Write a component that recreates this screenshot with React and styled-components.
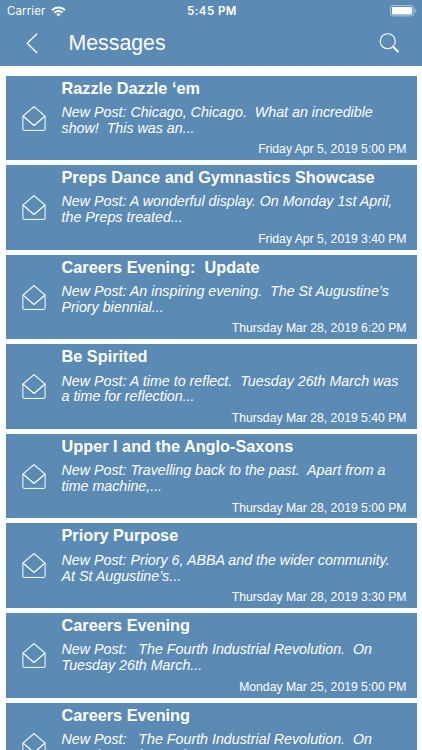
import React from "react";
import styled, { createGlobalStyle } from "styled-components";

const blue = "#5b8ab4";

const GlobalStyle = createGlobalStyle`
  * {
    box-sizing: border-box;
  }
  html, body {
    margin: 0;
    height: 100%;
    overflow: hidden;
    background: #fff;
  }
`;

const Screen = styled.div`
  width: 422px;
  height: 750px;
  overflow: hidden;
  display: flex;
  flex-direction: column;
  background: #fff;
  color: #fff;
  font-family: "Liberation Sans", Arial, sans-serif;
`;

const Header = styled.header`
  flex: none;
  height: 65.5px;
  background: ${blue};
`;

const StatusBar = styled.div`
  height: 22px;
  padding: 0 5px 0 7px;
  display: grid;
  grid-template-columns: 1fr auto 1fr;
  align-items: center;
  font-family: Inter, sans-serif;
  font-size: 11.5px;
  line-height: 22px;
`;

const Carrier = styled.div`
  display: flex;
  align-items: center;
  gap: 5.5px;
  letter-spacing: 0.12px;
`;

const Clock = styled.div`
  font-weight: 600;
  letter-spacing: 0.45px;
`;

const Battery = styled.svg`
  justify-self: end;
`;

const NavBar = styled.div`
  height: 43px;
  padding: 0 22px 0 26px;
  display: flex;
  align-items: center;
`;

const NavTitle = styled.h1`
  flex: 1;
  margin: 0 0 0 30.5px;
  font-size: 21.3px;
  font-weight: 400;
  line-height: 43px;
`;

const List = styled.main`
  padding: 10px 5.5px 0;
  display: flex;
  flex-direction: column;
  gap: 5.1px;
`;

const Card = styled.article`
  flex: none;
  height: 84.5px;
  display: flex;
  background: ${blue};
`;

const IconCell = styled.div`
  width: 56px;
  padding: 30px 0 0 16px;
`;

const Content = styled.div`
  flex: 1;
  padding-right: 10px;
  display: flex;
  flex-direction: column;
`;

const Title = styled.h2`
  margin: 3px 0 0;
  font-size: 16.3px;
  font-weight: 700;
  line-height: 19px;
  white-space: pre;
`;

const Preview = styled.p`
  margin: 7.4px 0 0;
  font-size: 14.25px;
  font-style: italic;
  line-height: 15.8px;
  white-space: pre;
`;

const PostDate = styled.time`
  margin-top: 5.8px;
  font-size: 12.2px;
  line-height: 15px;
  text-align: right;
`;

const messages = [
  { title: "Razzle Dazzle ‘em", text: "New Post: Chicago, Chicago.  What an incredible\nshow!  This was an...", date: "Friday Apr 5, 2019 5:00 PM" },
  { title: "Preps Dance and Gymnastics Showcase", text: "New Post: A wonderful display. On Monday 1st April,\nthe Preps treated...", date: "Friday Apr 5, 2019 3:40 PM" },
  { title: "Careers Evening:  Update", text: "New Post: An inspiring evening.  The St Augustine’s\nPriory biennial...", date: "Thursday Mar 28, 2019 6:20 PM" },
  { title: "Be Spirited", text: "New Post: A time to reflect.  Tuesday 26th March was\na time for reflection...", date: "Thursday Mar 28, 2019 5:40 PM" },
  { title: "Upper I and the Anglo-Saxons", text: "New Post: Travelling back to the past.  Apart from a\ntime machine,...", date: "Thursday Mar 28, 2019 5:00 PM" },
  { title: "Priory Purpose", text: "New Post: Priory 6, ABBA and the wider community.\nAt St Augustine’s...", date: "Thursday Mar 28, 2019 3:30 PM" },
  { title: "Careers Evening", text: "New Post:   The Fourth Industrial Revolution.  On\nTuesday 26th March...", date: "Monday Mar 25, 2019 5:00 PM" },
  { title: "Careers Evening", text: "New Post:   The Fourth Industrial Revolution.  On\nTuesday 26th March...", date: "Monday Mar 25, 2019 5:00 PM" },
];

function WifiIcon() {
  return (
    <svg width="15" height="11" viewBox="0 0 15 11" fill="none" stroke="#fff" strokeWidth="2">
      <path d="M1 4.1a9.3 9.3 0 0 1 13 0" />
      <path d="M3.3 6.6a6 6 0 0 1 8.4 0" />
      <path d="M7.5 10.6 5.2 8.3a3.3 3.3 0 0 1 4.6 0z" fill="#fff" stroke="none" />
    </svg>
  );
}

function BatteryIcon() {
  return (
    <Battery width="27" height="12" viewBox="0 0 27 12">
      <rect x="0.5" y="0.6" width="23.3" height="10.3" rx="2.4" fill="none" stroke="#fff" strokeOpacity="0.5" />
      <rect x="2" y="2.1" width="20.2" height="7.3" rx="1" fill="#fff" />
      <path d="M24.9 3.9q1.5.5 1.5 1.8t-1.5 1.8z" fill="#fff" fillOpacity="0.5" />
    </Battery>
  );
}

function BackIcon() {
  return (
    <svg width="12" height="22" viewBox="0 0 12 22" fill="none" stroke="#fff" strokeWidth="1.4">
      <path d="M11.1.7 1.2 10.2l9.9 9.7" />
    </svg>
  );
}

function SearchIcon() {
  return (
    <svg width="21" height="21" viewBox="0 0 21 21" fill="none" stroke="#fff">
      <circle cx="8.7" cy="8.2" r="7.5" strokeWidth="1.1" />
      <path d="m13.8 13.4 1.2 1.1" strokeWidth="1.2" />
      <path d="m14.4 14 5 5" strokeWidth="2" />
    </svg>
  );
}

function EnvelopeIcon() {
  return (
    <svg width="24" height="26" viewBox="0 0 24 26" fill="none" stroke="#fff" strokeLinejoin="round">
      <path d="M.9 10.1v13.2q0 1.1 1.1 1.1h20q1.1 0 1.1-1.1V10.1" strokeWidth="1" />
      <path d="M.9 10.1 12 .6l11.1 9.5L12 19.4z" strokeWidth="1.25" />
    </svg>
  );
}

function MessageCard({ message }) {
  return (
    <Card>
      <IconCell>
        <EnvelopeIcon />
      </IconCell>
      <Content>
        <Title>{message.title}</Title>
        <Preview>{message.text}</Preview>
        <PostDate>{message.date}</PostDate>
      </Content>
    </Card>
  );
}

function App() {
  return (
    <Screen>
      <GlobalStyle />
      <Header>
        <StatusBar>
          <Carrier>
            Carrier
            <WifiIcon />
          </Carrier>
          <Clock>5:45 PM</Clock>
          <BatteryIcon />
        </StatusBar>
        <NavBar>
          <BackIcon />
          <NavTitle>Messages</NavTitle>
          <SearchIcon />
        </NavBar>
      </Header>
      <List>
        {messages.map((el, index) => (
          <MessageCard key={index} message={el} />
        ))}
      </List>
    </Screen>
  );
}

export default App;
